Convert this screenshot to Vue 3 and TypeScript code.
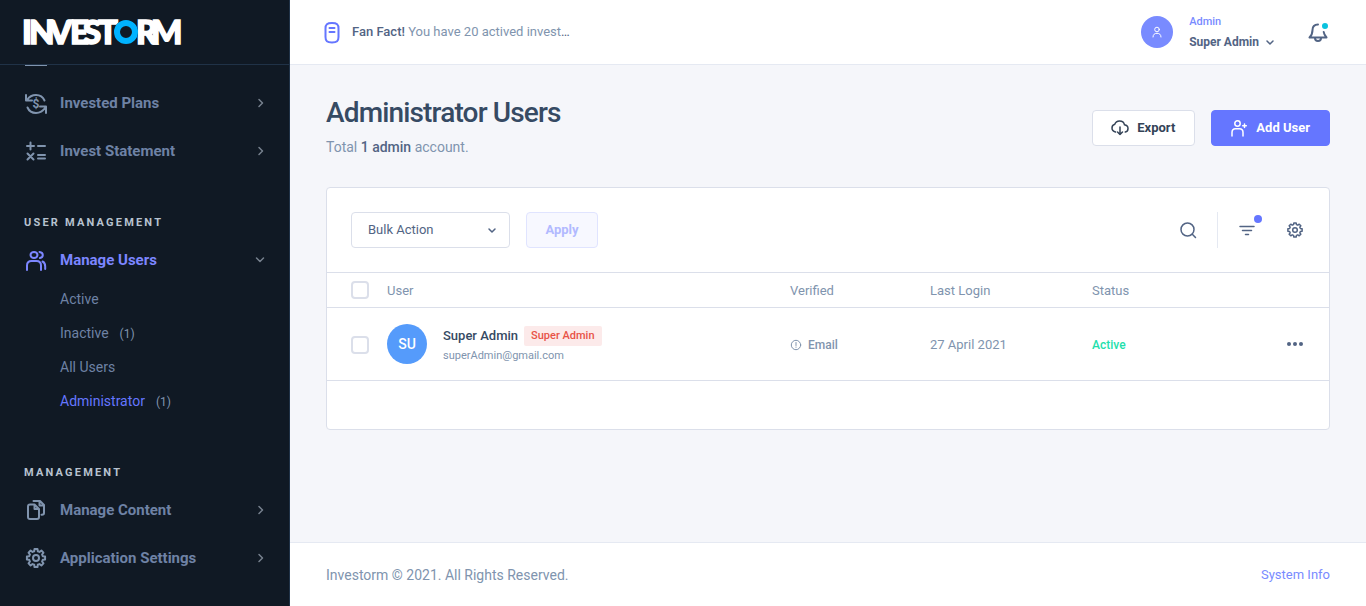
<script setup lang="ts">
import { ref } from 'vue'

interface SubItem {
  label: string
  count?: number
  active?: boolean
}
interface MenuItem {
  label: string
  icon: 'plans' | 'statement' | 'users' | 'content' | 'settings'
  open?: boolean
  children?: SubItem[]
}
interface MenuGroup {
  heading?: string
  items: MenuItem[]
}

const groups: MenuGroup[] = [
  {
    items: [
      { label: 'Invested Plans', icon: 'plans' },
      { label: 'Invest Statement', icon: 'statement' },
    ],
  },
  {
    heading: 'USER MANAGEMENT',
    items: [
      {
        label: 'Manage Users',
        icon: 'users',
        open: true,
        children: [
          { label: 'Active' },
          { label: 'Inactive', count: 1 },
          { label: 'All Users' },
          { label: 'Administrator', count: 1, active: true },
        ],
      },
    ],
  },
  {
    heading: 'MANAGEMENT',
    items: [
      { label: 'Manage Content', icon: 'content' },
      { label: 'Application Settings', icon: 'settings' },
    ],
  },
]

const bulkAction = ref('')
const allChecked = ref(false)
const rowChecked = ref(false)

function gearPath(cx: number, cy: number, outer: number, inner: number): string {
  const points: string[] = []
  const teeth = 8
  for (let i = 0; i < teeth; i++) {
    const mid = (i * 2 * Math.PI) / teeth
    const steps: [number, number][] = [
      [-0.26, inner],
      [-0.16, outer],
      [0.16, outer],
      [0.26, inner],
    ]
    for (const [offset, radius] of steps) {
      const x = cx + radius * Math.sin(mid + offset)
      const y = cy - radius * Math.cos(mid + offset)
      points.push(`${x.toFixed(2)} ${y.toFixed(2)}`)
    }
  }
  return `M${points.join('L')}Z`
}

const menuGear = gearPath(11, 11, 9.2, 7)
const toolGear = gearPath(9, 9, 7.2, 5.6)
</script>

<template>
  <div class="app">
    <aside class="sidebar">
      <div class="brand">
        <a href="#" class="logo" aria-label="Investorm">
          <svg width="168" height="44" viewBox="-4 0 168 44">
            <text class="logo-text" y="34" x="-2 5 25 46 59 74">INVEST</text>
            <text class="logo-text" y="34" x="112 127">RM</text>
            <circle class="logo-gap" cx="102" cy="22" r="12" />
            <circle class="logo-ring" cx="102" cy="22" r="9" />
          </svg>
        </a>
      </div>
      <nav class="menu">
        <div class="menu-clip"></div>
        <section v-for="(group, g) in groups" :key="g" class="group">
          <h2 v-if="group.heading" class="group-heading">{{ group.heading }}</h2>
          <ul class="list">
            <li v-for="item in group.items" :key="item.label">
              <a href="#" class="item" :class="{ open: item.open }">
                <svg class="item-icon" width="22" height="22" viewBox="0 0 22 22">
                  <template v-if="item.icon === 'plans'">
                    <path d="M1 3v5.500h6M2 8C4 5 7 3 11 3c4 0 7 2 8.500 5.500M21 21v-6.500h-6M20.500 15.500C18 19 15 21 11 21c-4 0-7-2-8.500-5.500" />
                    <text x="11" y="16" class="dollar" text-anchor="middle">$</text>
                  </template>
                  <path v-else-if="item.icon === 'statement'" d="M2 6h7M5.500 2.500v7M13 6h7M2.500 13.500l6 6M8.500 13.500l-6 6M13 15h7M13 18.500h7" />
                  <template v-else-if="item.icon === 'users'">
                    <ellipse cx="9" cy="6" rx="3.500" ry="3" />
                    <path d="M2 21v-4.500c0-3 2-4.500 4.500-4.500h5c2.500 0 4.500 1.500 4.500 4.500V21M14.500 3c2 .3 3.300 1.500 3.300 3s-1 2.700-2.800 3M17.500 12.500c2 .8 2.700 2.500 2.700 5V20" />
                  </template>
                  <template v-else-if="item.icon === 'content'">
                    <path d="M3 7.500c0-1.300.7-2 2-2h4.500L14 10v8c0 1.300-.7 2-2 2H5c-1.300 0-2-.7-2-2zM9.500 5.500V10H14" />
                    <path d="M8.500 2H15l4 4v8c0 1.200-.7 1.800-2 1.800h-.5M14.500 2v4.500H19" />
                  </template>
                  <template v-else>
                    <path :d="menuGear" />
                    <circle cx="11" cy="11" r="3" />
                  </template>
                </svg>
                <span class="item-label">{{ item.label }}</span>
                <svg class="caret" width="12" height="12" viewBox="0 0 12 12">
                  <path :d="item.open ? 'M1.5 4l3.500 3.500 3.500-3.500' : 'M4 2.500l3.500 3.500-3.500 3.500'" />
                </svg>
              </a>
              <ul v-if="item.children" class="list sub">
                <li v-for="child in item.children" :key="child.label">
                  <a href="#" class="sub-item" :class="{ active: child.active }">
                    <span>{{ child.label }}</span>
                    <span v-if="child.count" class="count">({{ child.count }})</span>
                  </a>
                </li>
              </ul>
            </li>
          </ul>
        </section>
      </nav>
    </aside>

    <div class="main">
      <header class="topbar">
        <a href="#" class="news">
          <svg class="news-icon" width="16" height="24" viewBox="0 -1 16 24">
            <path d="M8 2c5 0 6.500 1.300 6.500 5.500v8.500c0 4.200-1.500 5.500-6.500 5.500s-6.500-1.300-6.500-5.500v-8.500C1.500 3.300 3 2 8 2zM5.500 7h5M5.500 11h5" />
          </svg>
          <p class="news-text"><strong>Fan Fact!</strong> <span>You have 20 actived invest</span>…</p>
        </a>
        <div class="tools">
          <button type="button" class="user">
            <span class="user-avatar">
              <svg width="16" height="16" viewBox="0 0 16 16">
                <circle cx="8" cy="5.500" r="2.300" />
                <path d="M4 13c0-2.500 1.600-3.700 4-3.700s4 1.200 4 3.700" />
              </svg>
            </span>
            <span class="user-info">
              <span class="user-role">Admin</span>
              <span class="user-name">Super Admin
                <svg width="10" height="10" viewBox="0 0 10 10"><path d="M2 4l3 3 3-3" /></svg>
              </span>
            </span>
          </button>
          <button type="button" class="bell" aria-label="Notifications">
            <svg width="22" height="22" viewBox="0 -1 22 22">
              <path d="M11 2.500C7 2.500 5.500 5 5.500 8c0 4-1 5.500-3 7.500h17c-1.500-1.800-2.500-3-2.800-5.500" />
              <path d="M8 16c0 1.800 1.300 3 3 3s3-1.200 3-3" />
            </svg>
            <span class="bell-dot"></span>
          </button>
        </div>
      </header>

      <main class="content">
        <div class="page-head">
          <div>
            <h1>Administrator Users</h1>
            <p class="summary">Total <strong>1 admin</strong> account.</p>
          </div>
          <div class="actions">
            <button type="button" class="btn btn-export">
              <svg width="18" height="18" viewBox="0 0 18 18">
                <path d="M4.500 13C2.500 12.500 1 11 1 9c0-1.800 1-3.200 2.800-3.700C4.500 3.200 6.500 2 8.500 2c2.500 0 4.500 1.500 5 3.800C15.700 6.200 17 7.700 17 9.500s-1 3.200-2.700 3.500M9 8v7.500M6.500 13L9 15.500 11.500 13" />
              </svg>
              Export
            </button>
            <button type="button" class="btn btn-add">
              <svg width="18" height="18" viewBox="0 0 18 18">
                <circle cx="7.500" cy="4.500" r="2.700" />
                <path d="M2 17v-3.500C2 11 3.500 9.700 5.500 9.700h4c2 0 3.500 1.300 3.500 3.800V17M14.500 5v3.500M12.700 6.700h3.600" />
              </svg>
              Add User
            </button>
          </div>
        </div>

        <section class="card">
          <div class="toolbar">
            <form class="bulk" @submit.prevent>
              <div class="select-wrap">
                <select v-model="bulkAction" aria-label="Bulk Action">
                  <option value="">Bulk Action</option>
                  <option value="suspend">Suspend</option>
                </select>
                <svg class="select-caret" width="10" height="10" viewBox="0 0 10 10"><path d="M2 4l3 3 3-3" /></svg>
              </div>
              <button type="submit" class="apply" disabled>Apply</button>
            </form>
            <div class="table-tools">
              <button type="button" class="tool" aria-label="Search">
                <svg width="18" height="18" viewBox="0 0 18 18"><circle cx="8.500" cy="8.500" r="6.500" /><path d="M13.300 13.300L16.500 16.500" /></svg>
              </button>
              <span class="divider"></span>
              <button type="button" class="tool tool-filter" aria-label="Filter">
                <svg width="18" height="18" viewBox="0 0 18 18"><path d="M2 5.500h14M4.500 9.500h9M7.500 13.500h3" /></svg>
                <span class="filter-dot"></span>
              </button>
              <button type="button" class="tool" aria-label="Table settings">
                <svg width="18" height="18" viewBox="0 0 18 18"><path :d="toolGear" /><circle cx="9" cy="9" r="2.300" /></svg>
              </button>
            </div>
          </div>

          <table class="users">
            <colgroup>
              <col class="col-check" />
              <col />
              <col class="col-verified" />
              <col class="col-login" />
              <col class="col-status" />
              <col class="col-more" />
            </colgroup>
            <thead>
              <tr>
                <th class="check"><input v-model="allChecked" type="checkbox" aria-label="Select all users" /></th>
                <th scope="col">User</th>
                <th scope="col">Verified</th>
                <th scope="col">Last Login</th>
                <th scope="col">Status</th>
                <th></th>
              </tr>
            </thead>
            <tbody>
              <tr>
                <td class="check info"><input v-model="rowChecked" type="checkbox" aria-label="Select Super Admin" /></td>
                <td>
                  <div class="person">
                    <span class="avatar">SU</span>
                    <div class="person-text">
                      <div class="person-name">Super Admin <span class="badge">Super Admin</span></div>
                      <div class="person-mail">superAdmin@gmail.com</div>
                    </div>
                  </div>
                </td>
                <td class="info">
                  <span class="verified">
                    <svg width="12" height="12" viewBox="0 0 12 12"><circle cx="6" cy="6" r="4.700" /><path d="M6 3.500v3M6 8v.3" /></svg>
                    Email
                  </span>
                </td>
                <td class="info">27 April 2021</td>
                <td class="info"><span class="status">Active</span></td>
                <td class="more">
                  <button type="button" class="tool" aria-label="More actions">
                    <svg class="dots" width="18" height="18" viewBox="0 0 18 18"><circle cx="3" cy="9" r="2" /><circle cx="9" cy="9" r="2" /><circle cx="15" cy="9" r="2" /></svg>
                  </button>
                </td>
              </tr>
            </tbody>
          </table>
          <div class="card-foot"></div>
        </section>
      </main>

      <footer class="footer">
        <span>Investorm © 2021. All Rights Reserved.</span>
        <a href="#">System Info</a>
      </footer>
    </div>
  </div>
</template>

<style>
body {
  margin: 0;
  background: #f5f6fa;
}
</style>

<style scoped>
.app,
.app * {
  box-sizing: border-box;
}
.app {
  display: flex;
  height: 100vh;
  font-family: Roboto, "Liberation Sans", sans-serif;
  font-size: 14px;
  line-height: 22px;
  color: #526484;
}
a {
  color: inherit;
  text-decoration: none;
}
button {
  font: inherit;
  color: inherit;
  padding: 0;
  border: 0;
  background: none;
  cursor: pointer;
}
svg {
  display: block;
  flex: none;
  fill: none;
  stroke: currentColor;
  stroke-width: 1.5;
  stroke-linecap: round;
  stroke-linejoin: round;
}
h1,
h2,
p {
  margin: 0;
}

/* Sidebar */
.sidebar {
  display: flex;
  flex-direction: column;
  flex: none;
  width: 290px;
  background: #101924;
  border-right: 1px solid #203247;
}
.brand {
  display: flex;
  align-items: center;
  flex: none;
  height: 65px;
  padding: 0 20px;
  border-bottom: 1px solid #203247;
}
.logo svg {
  stroke: none;
  overflow: visible;
}
.logo-text {
  font-family: Lato, sans-serif;
  font-weight: 900;
  font-size: 33px;
  fill: #fff;
  stroke: #fff;
  stroke-width: 1.5;
  stroke-linejoin: miter;
}
.logo-gap {
  fill: #101924;
}
.logo-ring {
  stroke: #00b3ff;
  stroke-width: 6;
}
.menu {
  flex: 1;
  overflow: hidden;
}
.menu-clip {
  width: 22px;
  height: 1px;
  margin: 0 25px 13px;
  background: #8094ae;
}
.group {
  padding-bottom: 37px;
}
.group-heading {
  padding: 0 24px;
  margin-bottom: 2px;
  font-size: 11px;
  font-weight: 700;
  letter-spacing: 0.2em;
  color: #b7c2d0;
}
.list {
  list-style: none;
  margin: 0;
  padding: 0;
}
.item {
  display: flex;
  align-items: center;
  height: 48px;
  padding: 0 22px 0 25px;
  font-size: 15px;
  font-weight: 700;
  color: #6e82a5;
}
.item-icon {
  stroke-width: 2;
  color: #8094ae;
}
.item-label {
  flex: 1;
  padding-left: 13px;
}
.dollar {
  font-size: 12px;
  font-weight: 700;
  fill: currentColor;
  stroke: none;
}
.caret {
  color: #77818e;
}
.open,
.open .item-icon {
  color: #7c86ff;
}
.sub {
  margin-top: -2px;
  padding-bottom: 7px;
}
.sub-item {
  display: flex;
  align-items: center;
  gap: 11px;
  height: 34px;
  padding-left: 60px;
  color: #6e82a5;
}
.sub-item.active {
  color: #6576ff;
}
.count {
  padding-top: 1px;
  font-size: 12px;
  color: #8094ae;
}

/* Top bar */
.main {
  display: flex;
  flex-direction: column;
  flex: 1;
  min-width: 0;
  background: #f5f6fa;
}
.topbar {
  display: flex;
  align-items: center;
  justify-content: space-between;
  flex: none;
  height: 65px;
  padding: 0 37px 0 34px;
  background: #fff;
  border-bottom: 1px solid #e5e9f2;
}
.news {
  display: flex;
  align-items: center;
  gap: 12px;
  font-size: 13px;
}
.news-icon {
  stroke-width: 2;
  color: #6576ff;
}
.news-text strong {
  font-weight: 500;
}
.news-text span {
  color: #8094ae;
}
.tools {
  display: flex;
  align-items: center;
  gap: 32px;
}
.user {
  display: flex;
  align-items: center;
  gap: 16px;
  text-align: left;
}
.user-avatar {
  display: grid;
  place-items: center;
  width: 32px;
  height: 32px;
  border-radius: 50%;
  background: #798bff;
  color: #fff;
}
.user-avatar svg {
  stroke-width: 1;
}
.user-info {
  display: flex;
  flex-direction: column;
}
.user-role {
  font-size: 11px;
  font-weight: 500;
  line-height: 20px;
  color: #798bff;
}
.user-name {
  display: flex;
  align-items: center;
  gap: 6px;
  font-size: 12px;
  font-weight: 700;
  line-height: 20px;
}
.bell {
  position: relative;
}
.bell svg {
  stroke-width: 2;
}
.bell-dot {
  position: absolute;
  top: 0;
  right: -1px;
  width: 10px;
  height: 10px;
  border: 2px solid #fff;
  border-radius: 50%;
  background: #09c2de;
}

/* Page heading */
.content {
  flex: 1;
  padding: 30px 36px;
}
.page-head {
  display: flex;
  align-items: center;
  justify-content: space-between;
  margin-bottom: 26px;
}
h1 {
  margin-bottom: 5px;
  font-size: 28px;
  font-weight: 500;
  line-height: 36px;
  letter-spacing: -0.03em;
  color: #364a63;
}
.summary {
  padding-bottom: 3px;
  color: #8094ae;
}
.summary strong {
  font-weight: 500;
  color: #526484;
}
.actions {
  display: flex;
  gap: 16px;
}
.btn {
  display: flex;
  align-items: center;
  gap: 8px;
  height: 36px;
  padding: 0 19px 0 18px;
  border: 1px solid #dbdfea;
  border-radius: 4px;
  font-size: 13px;
  font-weight: 700;
}
.btn-export {
  background: #fff;
  color: #344357;
}
.btn-add {
  background: #6576ff;
  border-color: #6576ff;
  color: #fff;
}

/* Card and table */
.card {
  background: #fff;
  border: 1px solid #dbdfea;
  border-radius: 4px;
}
.toolbar {
  display: flex;
  align-items: center;
  justify-content: space-between;
  padding: 24px;
}
.bulk {
  display: flex;
  gap: 16px;
}
.select-wrap {
  display: grid;
  align-items: center;
  width: 159px;
}
.select-wrap > * {
  grid-area: 1 / 1;
}
select {
  appearance: none;
  height: 36px;
  padding: 0 16px;
  border: 1px solid #dbdfea;
  border-radius: 4px;
  background: #fff;
  font: inherit;
  font-size: 13px;
  color: #526484;
}
.select-caret {
  justify-self: end;
  margin-right: 13px;
  pointer-events: none;
}
.apply {
  min-width: 72px;
  height: 36px;
  border: 1px solid #e0e4ff;
  border-radius: 4px;
  background: #f7f8ff;
  font-size: 13px;
  font-weight: 700;
  color: #b2baff;
}
.table-tools {
  display: flex;
  align-items: center;
}
.tool {
  display: grid;
  place-items: center;
  width: 20px;
  height: 36px;
}
.tool-filter {
  position: relative;
  margin: 0 28px 0 19px;
}
.divider {
  width: 1px;
  height: 36px;
  margin-left: 19px;
  background: #e5e9f2;
}
.filter-dot {
  position: absolute;
  top: 3px;
  right: -5px;
  width: 8px;
  height: 8px;
  border-radius: 50%;
  background: #6576ff;
}
.users {
  width: 100%;
  table-layout: fixed;
  border-collapse: collapse;
  font-size: 13px;
  color: #8094ae;
}
.col-check {
  width: 60px;
}
.col-verified {
  width: 140px;
}
.col-login {
  width: 162px;
}
.col-status {
  width: 137px;
}
.col-more {
  width: 100px;
}
th,
td {
  padding: 0;
  text-align: left;
  font-weight: 400;
  border-top: 1px solid #dbdfea;
  border-bottom: 1px solid #dbdfea;
}
th {
  height: 35px;
}
td {
  height: 73px;
}
th[scope],
.info {
  padding-top: 2px;
}
.check {
  padding-left: 24px;
}
input[type="checkbox"] {
  appearance: none;
  display: block;
  width: 18px;
  height: 18px;
  margin: 0;
  border: 2px solid #dbdfea;
  border-radius: 4px;
  background: #fff;
}
input[type="checkbox"]:checked {
  background: #6576ff;
}
.person {
  display: flex;
  align-items: center;
  gap: 16px;
}
.avatar {
  display: grid;
  place-items: center;
  width: 40px;
  height: 40px;
  border-radius: 50%;
  background: #559bfb;
  color: #fff;
  font-size: 14px;
  font-weight: 500;
}
.person-text {
  padding-top: 3px;
}
.person-name {
  display: flex;
  align-items: center;
  gap: 6px;
  font-weight: 500;
  line-height: 20px;
  color: #364a63;
}
.badge {
  padding: 0 7px;
  border-radius: 2px;
  background: #fceaea;
  font-size: 11px;
  color: #e85347;
}
.person-mail {
  font-size: 11px;
  line-height: 20px;
}
.verified {
  display: flex;
  align-items: center;
  gap: 6px;
  font-size: 12px;
  font-weight: 500;
}
.verified svg {
  stroke-width: 1;
}
.status {
  font-size: 12px;
  font-weight: 500;
  color: #1ee0ac;
}
.more {
  padding-right: 24px;
  color: #526484;
}
.more .tool {
  margin-left: auto;
}
.dots {
  fill: currentColor;
  stroke: none;
}
.card-foot {
  height: 48px;
}

/* Footer */
.footer {
  display: flex;
  align-items: center;
  justify-content: space-between;
  flex: none;
  height: 64px;
  padding: 0 36px;
  background: #fff;
  border-top: 1px solid #e5e9f2;
  color: #8094ae;
}
.footer a {
  font-size: 13px;
  color: #798bff;
}
</style>
